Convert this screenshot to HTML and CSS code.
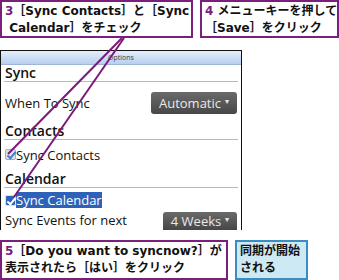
FILE: index.html
```html
<!DOCTYPE html>
<html lang="ja">
<head>
  <meta charset="UTF-8">
  <title>Sync Options</title>
  <link rel="stylesheet" href="styles.css">
</head>
<body>
  <div class="page">
    <div class="callouts top">
      <div class="callout step1">
        <span class="num">3</span>［Sync Contacts］と［Sync<br>&nbsp;Calendar］をチェック
      </div>
      <div class="callout step2">
        <span class="num">4</span> メニューキーを押して<br>［Save］をクリック
      </div>
    </div>

    <div class="phone">
      <div class="titlebar">Options</div>
      <div class="section">Sync</div>
      <div class="row">
        <span>When To Sync</span>
        <span class="spinner">Automatic <i>▾</i></span>
      </div>
      <div class="section">Contacts</div>
      <div class="check-row">
        <span class="check"></span><span>Sync Contacts</span>
      </div>
      <div class="section">Calendar</div>
      <div class="check-row selected">
        <span class="check"></span><span>Sync Calendar</span>
      </div>
      <div class="row last">
        <span>Sync Events for next</span>
        <span class="spinner short">4 Weeks <i>▾</i></span>
      </div>
    </div>

    <div class="callouts bottom">
      <div class="callout step5">
        <span class="num">5</span>［Do you want to syncnow?］が<br>表示されたら［はい］をクリック
      </div>
      <div class="callout note">同期が開始<br>される</div>
    </div>

    <svg class="leaders" width="339" height="280" viewBox="0 0 339 280">
      <line x1="122" y1="38" x2="8" y2="154" />
      <line x1="124" y1="38" x2="14" y2="197" />
    </svg>
  </div>
</body>
</html>
```

FILE: styles.css
```css
* {
  box-sizing: border-box;
}

body {
  margin: 0;
  background: #fff;
}

.page {
  position: relative;
  width: 339px;
  height: 280px;
  overflow: hidden;
}

.callouts {
  display: flex;
}

.callouts.top {
  height: 38px;
  gap: 7px;
}

.callouts.bottom {
  margin-top: 10px;
  height: 40px;
  gap: 7px;
}

.callout {
  border: 2px solid #7a1f7b;
  font-family: "DejaVu Sans", "Noto Sans CJK JP", sans-serif;
  font-weight: bold;
  font-size: 12px;
  line-height: 17px;
  color: #111;
  padding: 1px 0 0 3px;
  white-space: nowrap;
}

.callout .num {
  color: #7a1f7b;
}

.step1 {
  width: 193px;
}

.step2 {
  width: 139px;
}

.step5 {
  width: 228px;
}

.note {
  width: 73px;
  background: #cde9f3;
  border-color: #3a8cc1;
}

.phone {
  margin-top: 12px;
  width: 242px;
  height: 180px;
  border: 1px solid #111;
  border-bottom: none;
  font-family: "Open Sans", "Noto Sans", sans-serif;
  font-size: 13px;
  color: #111;
  overflow: hidden;
}

.titlebar {
  height: 14px;
  background: linear-gradient(#e6effb, #b6cff0);
  border-bottom: 1px solid #9fb6d6;
  font-size: 7px;
  line-height: 14px;
  text-align: center;
  color: #444;
}

.section {
  margin: 0 3px;
  height: 17px;
  padding-left: 1px;
  border-bottom: 1px solid #b8b8b8;
  font-weight: 600;
  font-size: 14px;
  line-height: 16px;
}

.row {
  display: flex;
  align-items: center;
  justify-content: space-between;
  height: 41px;
  padding: 0 4px 0 4px;
}

.row.last {
  height: 18px;
  align-items: flex-start;
  line-height: 16px;
}

.spinner {
  display: inline-flex;
  align-items: center;
  justify-content: center;
  width: 86px;
  height: 22px;
  border-radius: 3px;
  background: linear-gradient(#6a6a6a, #474747);
  color: #e8e8e8;
  font-size: 13px;
}

.spinner.short {
  width: 74px;
  height: 18px;
  border-radius: 3px 3px 0 0;
}

.spinner i {
  font-style: normal;
  font-size: 8px;
  margin-left: 4px;
  margin-top: -5px;
}

.check-row {
  display: flex;
  align-items: center;
  height: 31px;
  padding: 0 0 2px 4px;
}

.check-row.selected {
  height: 24px;
  padding: 4px 0 0 4px;
  align-items: flex-start;
}

.check-row.selected .check {
  background: #2e62b8;
  border-color: #cfe0f7;
  margin-top: 3px;
}

.check-row.selected span:last-child {
  background: #2e62b8;
  color: #fff;
  line-height: 16px;
}

.check {
  width: 11px;
  height: 11px;
  border: 1px solid #aaa;
  border-radius: 2px;
  background: #e4e4e4;
  position: relative;
}

.check::after {
  content: "";
  position: absolute;
  left: 3px;
  top: 0;
  width: 3px;
  height: 7px;
  border: solid #3f7fe0;
  border-width: 0 2px 2px 0;
  transform: rotate(40deg);
}

.check-row.selected .check::after {
  border-color: #fff;
}

.leaders {
  position: absolute;
  left: 0;
  top: 0;
  pointer-events: none;
}

.leaders line {
  stroke: #7a1a7a;
  stroke-width: 2;
}
```
